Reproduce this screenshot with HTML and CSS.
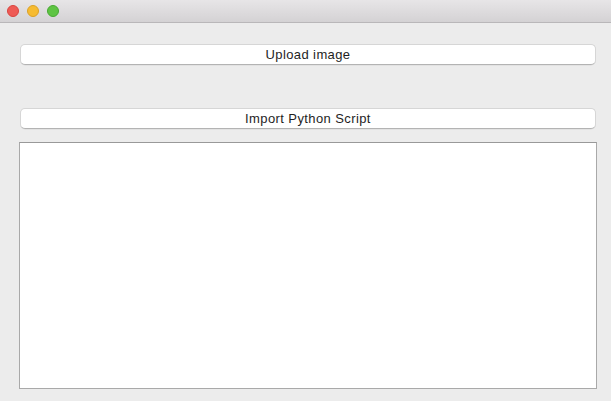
FILE: index.html
```html
<!DOCTYPE html>
<html>
<head>
<meta charset="utf-8">
<link rel="stylesheet" href="styles.css">
</head>
<body>
<div class="window">
  <div class="titlebar">
    <span class="light red"></span>
    <span class="light yellow"></span>
    <span class="light green"></span>
  </div>
  <div class="content">
    <button class="btn btn-upload">Upload image</button>
    <button class="btn btn-import">Import Python Script</button>
    <div class="editor"></div>
  </div>
</div>
</body>
</html>
```
FILE: styles.css
```css
html, body {
  margin: 0;
  padding: 0;
  width: 611px;
  height: 401px;
  overflow: hidden;
  background: #ececec;
}
.window {
  display: flex;
  flex-direction: column;
  height: 401px;
}
.titlebar {
  height: 22px;
  border-bottom: 1px solid #b9b7b9;
  background: linear-gradient(#e9e7e9, #d4d2d4);
  display: flex;
  align-items: center;
  gap: 8px;
  padding-left: 7px;
  box-sizing: content-box;
  margin-top: -2px;
  padding-top: 2px;
}
.light {
  width: 12px;
  height: 12px;
  border-radius: 50%;
  box-sizing: border-box;
}
.red { background: #ee5a55; border: 1px solid #d9443f; }
.yellow { background: #f6bb31; border: 1px solid #dca125; }
.green { background: #5ec443; border: 1px solid #48a932; }
.content {
  display: flex;
  flex-direction: column;
  padding: 21px 14px 0 19px;
}
.btn {
  font-family: "Helvetica Neue", "Liberation Sans", Arial, sans-serif;
  font-size: 13px;
  letter-spacing: 0.4px;
  color: #1e1e1e;
  height: 21px;
  margin: 0 1px;
  background: #fff;
  border: 1px solid #d6d6d6;
  border-bottom-color: #b3b3b3;
  border-radius: 5px;
  box-shadow: 0 0.5px 0.5px rgba(0,0,0,0.08);
  padding: 0;
  line-height: 19px;
}
.btn-import {
  margin-top: 43px;
}
.editor {
  margin-top: 13px;
  height: 245px;
  background: #fff;
  border: 1px solid #a9a9a9;
  border-top-color: #999;
}
```
